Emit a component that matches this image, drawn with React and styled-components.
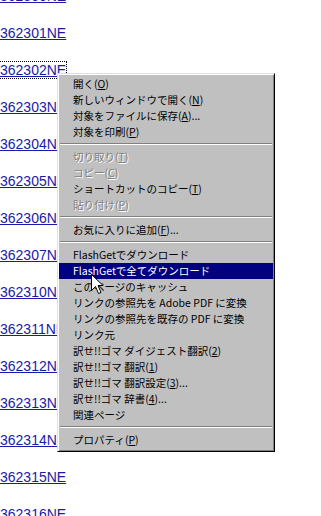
import React from "react";
import styled, { createGlobalStyle } from "styled-components";

const Global = createGlobalStyle`
  html, body { margin: 0; padding: 0; background: #fff; overflow: hidden; }
  body { width: 321px; height: 516px; position: relative; }
`;

const Page = styled.div`
  position: relative;
  width: 321px;
  height: 516px;
  overflow: hidden;
  background: #fff;
`;

const List = styled.div`
  display: flex;
  flex-direction: column;
  align-items: flex-start;
  gap: 21px;
  margin-top: -12px;
`;

const Link = styled.a`
  display: block;
  font-family: "Liberation Sans", Arial, sans-serif;
  font-size: 14px;
  line-height: 16px;
  color: #1a1aa8;
  text-decoration: underline;
  outline: ${(p) => (p.$focus ? "1px dotted #000" : "none")};
  outline-offset: 0;
  cursor: pointer;
`;

const Menu = styled.div`
  position: absolute;
  left: 57px;
  top: 73px;
  width: 218px;
  box-sizing: border-box;
  background: #c0c0c0;
  border: 1px solid;
  border-color: #dfdfdf #000 #000 #dfdfdf;
  box-shadow: inset 1px 1px 0 #fff, inset -1px -1px 0 #808080;
  padding: 2px 1px 3px;
  font-family: "Noto Sans CJK JP", "Liberation Sans", sans-serif;
`;

const Item = styled.div`
  height: 16px;
  display: flex;
  align-items: center;
  padding-left: 14px;
  font-size: 10.5px;
  line-height: 16px;
  white-space: nowrap;
  color: ${(p) => (p.$active ? "#fff" : p.$disabled ? "#808080" : "#000")};
  background: ${(p) => (p.$active ? "#000080" : "transparent")};
  text-shadow: ${(p) => (p.$disabled ? "1px 1px 0 #fff" : "none")};
`;

const Sep = styled.div`
  height: 9px;
  box-sizing: border-box;
  padding-top: 3px;
  &::before {
    content: "";
    display: block;
    margin: 0 1px;
    border-top: 1px solid #808080;
    border-bottom: 1px solid #fff;
  }
`;

const Cursor = styled.svg`
  position: absolute;
  left: 91px;
  top: 274px;
`;

const links = [
  "362300NE", "362301NE", "362302NE", "362303NE", "362304NE", "362305NE",
  "362306NE", "362307NE", "362310NE", "362311NE", "362312NE", "362313NE",
  "362314NE", "362315NE", "362316NE",
];

const M = ({ pre, k, post }) => (
  <span>
    {pre}(<u>{k}</u>){post}
  </span>
);

const menu = [
  { c: <M pre="開く" k="O" /> },
  { c: <M pre="新しいウィンドウで開く" k="N" /> },
  { c: <M pre="対象をファイルに保存" k="A" post="..." /> },
  { c: <M pre="対象を印刷" k="P" /> },
  { sep: true },
  { c: <M pre="切り取り" k="T" />, d: true },
  { c: <M pre="コピー" k="C" />, d: true },
  { c: <M pre="ショートカットのコピー" k="T" /> },
  { c: <M pre="貼り付け" k="P" />, d: true },
  { sep: true },
  { c: <M pre="お気に入りに追加" k="F" post="..." /> },
  { sep: true },
  { c: "FlashGetでダウンロード" },
  { c: "FlashGetで全てダウンロード", a: true },
  { c: "このページのキャッシュ" },
  { c: "リンクの参照先を Adobe PDF に変換" },
  { c: "リンクの参照先を既存の PDF に変換" },
  { c: "リンク元" },
  { c: <M pre="訳せ!!ゴマ ダイジェスト翻訳" k="2" /> },
  { c: <M pre="訳せ!!ゴマ 翻訳" k="1" /> },
  { c: <M pre="訳せ!!ゴマ 翻訳設定" k="3" post="..." /> },
  { c: <M pre="訳せ!!ゴマ 辞書" k="4" post="..." /> },
  { c: "関連ページ" },
  { sep: true },
  { c: <M pre="プロパティ" k="P" /> },
];

export default function App() {
  return (
    <Page>
      <Global />
      <List>
        {links.map((l, i) => (
          <Link key={l} $focus={i === 2}>
            {l}
          </Link>
        ))}
      </List>
      <Menu>
        {menu.map((m, i) =>
          m.sep ? (
            <Sep key={i} />
          ) : (
            <Item key={i} $disabled={m.d} $active={m.a}>
              {m.c}
            </Item>
          )
        )}
      </Menu>
      <Cursor width="13" height="21" viewBox="0 0 13 21">
        <path
          d="M0.5 0.5 L0.5 16.5 L4.5 12.5 L7.5 19.5 L10 18.5 L7 11.5 L12 11.5 Z"
          fill="#fff"
          stroke="#000"
          strokeWidth="1"
        />
      </Cursor>
    </Page>
  );
}
